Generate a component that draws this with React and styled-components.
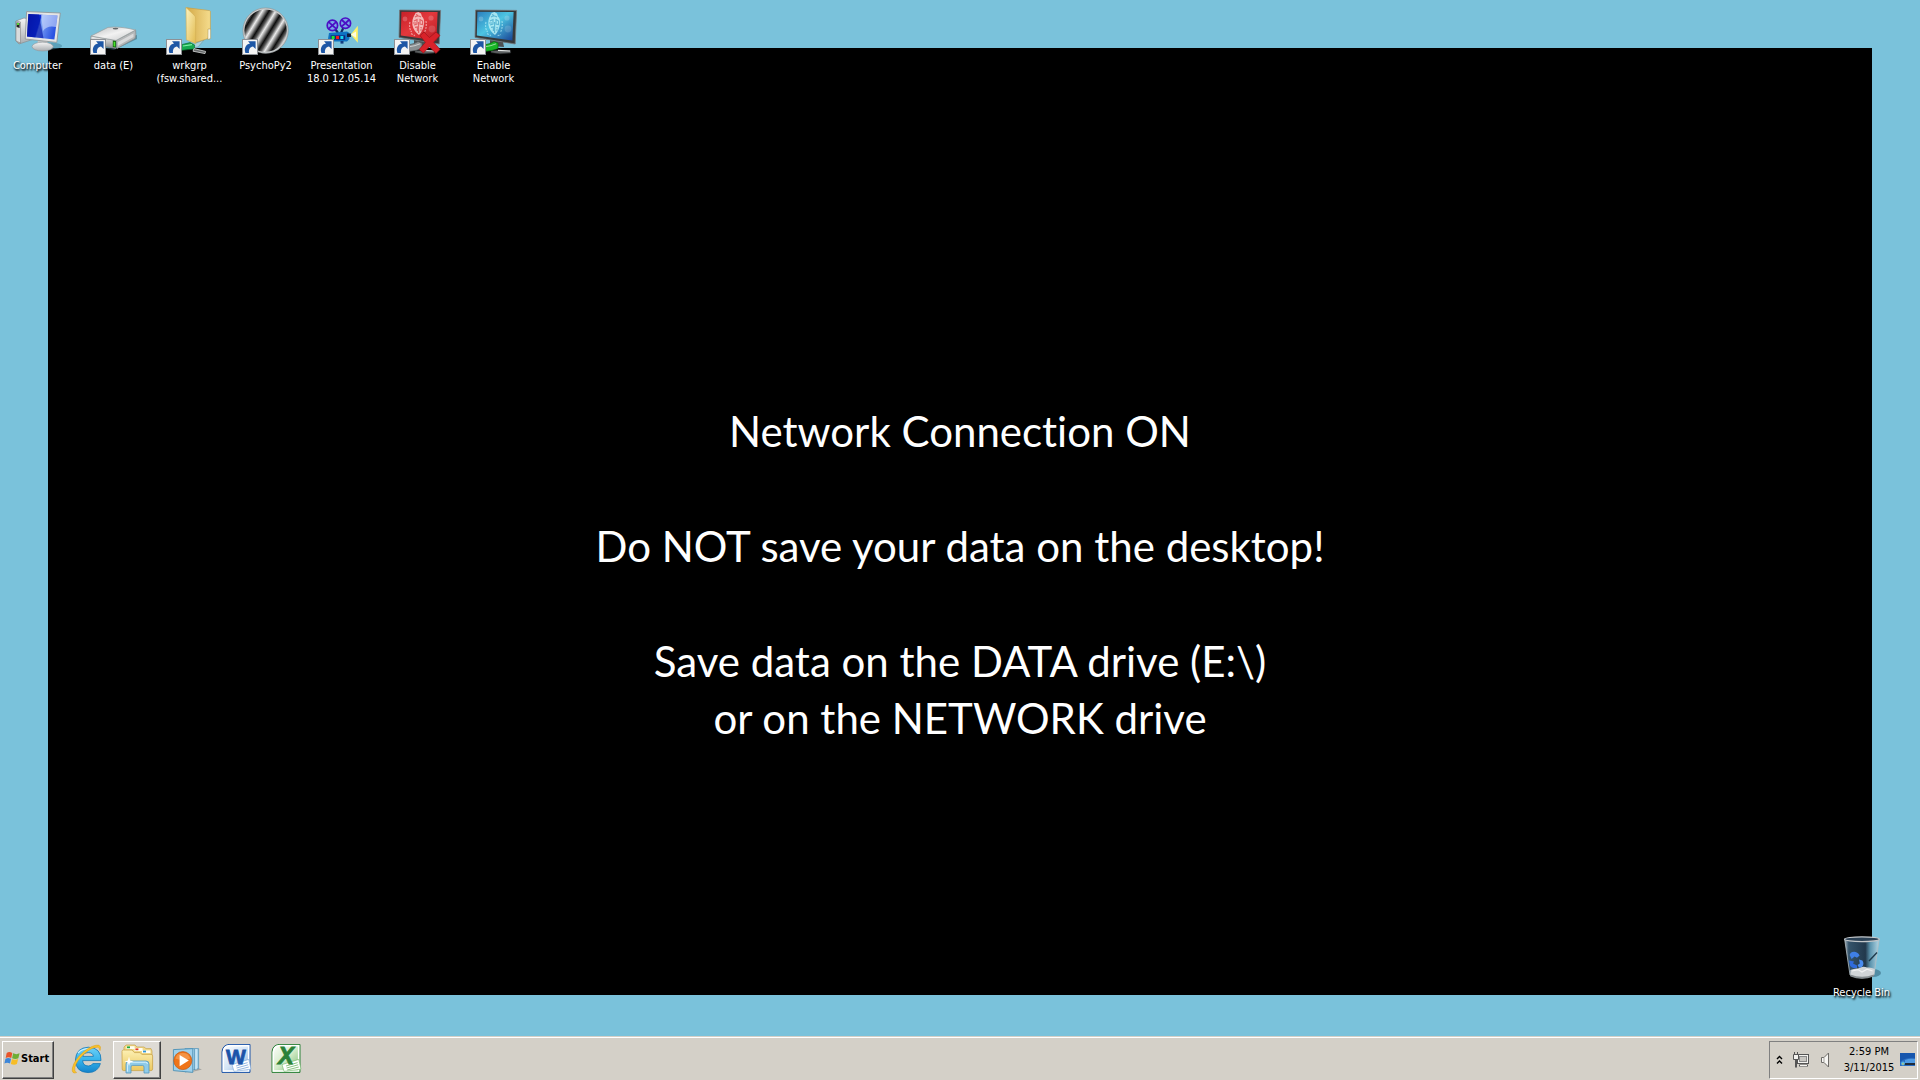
import React from "react";
import styled, { createGlobalStyle } from "styled-components";

const GlobalStyle = createGlobalStyle`
  *, *::before, *::after { box-sizing: border-box; }
  body { margin: 0; background: #7ac2db; }
  button { font: inherit; color: inherit; cursor: default; }
  p { margin: 0; }
`;

const ui = `"DejaVu Sans Condensed", "DejaVu Sans", sans-serif`;

const Screen = styled.div`
  display: flex;
  flex-direction: column;
  min-height: 100vh;
  font-family: ${ui};
  font-size: 11px;
`;

const Desktop = styled.main`
  position: relative;
  display: flex;
  flex: 1;
  padding: 48px 48px 41px;
  background: #7ac2db;
`;

const Wallpaper = styled.section`
  display: flex;
  flex: 1;
  flex-direction: column;
  align-items: center;
  justify-content: center;
  gap: 58px;
  padding-top: 106px;
  background: #000;
  color: #fff;
  font-family: Lato, sans-serif;
  font-size: 42px;
  font-variant-ligatures: none;
  line-height: 57px;
  text-align: center;
`;

const Shortcuts = styled.nav`
  position: absolute;
  top: 0;
  left: 0;
  display: flex;
  align-items: flex-start;
`;

const Bin = styled.div`
  position: absolute;
  right: 20px;
  bottom: 37px;
`;

const Shortcut = styled.button`
  display: flex;
  flex-direction: column;
  align-items: center;
  gap: 4px;
  width: 76px;
  padding: 7px 0 0;
  border: 0;
  background: none;
  color: #fff;
  line-height: 13px;
  text-align: center;
  text-shadow: 1px 1px 2px #000, 1px 2px 2px rgba(0, 0, 0, 0.7);
  svg { display: block; overflow: visible; }
`;

const Label = styled.span`
  padding-right: 1px;
  white-space: pre;
`;

const Taskbar = styled.footer`
  display: flex;
  align-items: center;
  height: 44px;
  padding: 3px 2px 1px;
  border-top: 1px solid #d4d0c8;
  background: #d4d0c8;
  box-shadow: inset 0 1px 0 #fff;
  color: #000;
`;

const raised = `
  border: 1px solid;
  border-color: #fff #404040 #404040 #fff;
  box-shadow: inset -1px -1px 0 #808080;
`;

const StartButton = styled.button`
  display: flex;
  align-items: center;
  gap: 1px;
  width: 52px;
  height: 38px;
  padding: 0 0 2px 1px;
  background: #d4d0c8;
  font-weight: 700;
  ${raised}
`;

const Apps = styled.nav`
  display: flex;
  flex: 1;
  gap: 2px;
  padding-left: 9px;
`;

const AppButton = styled.button`
  display: flex;
  align-items: center;
  justify-content: center;
  width: 48px;
  height: 38px;
  padding: 0;
  border: 1px solid transparent;
  background: ${(p) => (p.$open ? "#dedbd5" : "none")};
  ${(p) => (p.$open ? raised : "")}
`;

const Tray = styled.div`
  display: flex;
  align-items: center;
  height: 38px;
  padding: 0 0 0 5px;
  border: 1px solid;
  border-color: #808080 #fff #fff #808080;
`;

const TrayButton = styled.button`
  display: flex;
  align-items: center;
  justify-content: center;
  width: ${(p) => p.$width}px;
  height: 24px;
  padding: 0;
  border: 0;
  background: none;
`;

const Clock = styled.time`
  width: 56px;
  margin-left: 10px;
  line-height: 16px;
  text-align: center;
`;

const Big = ({ children }) => (
  <svg width="48" height="48" viewBox="0 0 48 48" aria-hidden="true">{children}</svg>
);

const Arrow = () => (
  <g>
    <rect x="0.5" y="32.5" width="15" height="15" fill="#f4f4f4" stroke="#8d9196" />
    <path d="M3.4 46C1.8 41 4 37.4 8 36.6L6 34.2H13.6V42L11 39.4C8 40 6.6 42 7 46Z" fill="#1d56a5" />
  </g>
);

const ComputerIcon = () => (
  <Big>
    <defs>
      <linearGradient id="pcScreen" x1="0" y1="0" x2="1" y2="0.25">
        <stop offset="0" stopColor="#0412a8" /><stop offset="0.45" stopColor="#0a2fd8" />
        <stop offset="0.5" stopColor="#7ea4f4" /><stop offset="1" stopColor="#2a53e2" />
      </linearGradient>
      <linearGradient id="pcMetal" x1="0" y1="0" x2="0" y2="1">
        <stop offset="0" stopColor="#f5f5f5" /><stop offset="1" stopColor="#a9adb0" />
      </linearGradient>
    </defs>
    <ellipse cx="35" cy="39" rx="13" ry="3.5" fill="#3c7f99" opacity="0.5" />
    <path d="M2 14L10 11L20 13V32L5 37L2 34Z" fill="url(#pcMetal)" stroke="#8b9093" strokeWidth="0.7" />
    <path d="M2 14L6.5 15V36L2 34Z" fill="#d9dbdc" stroke="#777" strokeWidth="0.5" />
    <path d="M2.6 15.5L5.6 16V21L2.6 20Z" fill="#222" />
    <rect x="3" y="16" width="2" height="2" fill="#55d733" />
    <path d="M24 33H33L34 39H23Z" fill="#c4c7c8" />
    <ellipse cx="28.6" cy="39.6" rx="10.6" ry="4.4" fill="url(#pcMetal)" stroke="#92979a" strokeWidth="0.6" />
    <path d="M12.6 4.6L46.3 6L42.8 35.4L11.2 32Z" fill="#e4e5e5" stroke="#8c9092" strokeWidth="0.8" />
    <path d="M14.4 7L43.5 8.6L40.4 32.4L13 29.5Z" fill="url(#pcScreen)" />
    <path d="M27 7.8L43.5 8.6L42 20Q33 18 29 24Z" fill="#dfe8ff" opacity="0.55" />
    <path d="M14.4 7L25 7.6L29.5 31.2L13 29.5Z" fill="#0515a6" opacity="0.65" />
  </Big>
);

const DriveIcon = () => (
  <Big>
    <defs>
      <linearGradient id="driveTop" x1="0" y1="0" x2="1" y2="1">
        <stop offset="0" stopColor="#bcbebf" /><stop offset="0.5" stopColor="#f2f2f2" /><stop offset="1" stopColor="#c6c8c9" />
      </linearGradient>
      <linearGradient id="driveFront" x1="0" y1="0" x2="0" y2="1">
        <stop offset="0" stopColor="#f2f2f2" /><stop offset="1" stopColor="#888b8c" />
      </linearGradient>
    </defs>
    <path d="M3 39L24 43L47 32V28Z" fill="#355c6b" opacity="0.5" />
    <path d="M1 29L26 33.5V41.5L2 37Q0 33 1 29Z" fill="url(#driveFront)" stroke="#85898b" strokeWidth="0.7" />
    <path d="M26 33.5L45.6 23Q46.5 28 45 31.5L27 41.5Z" fill="#b4b7b8" stroke="#85898b" strokeWidth="0.7" />
    <path d="M1 29L18 20.4Q30 19 45.6 23L26 33.5Z" fill="url(#driveTop)" stroke="#9a9d9e" strokeWidth="0.7" />
    <path d="M28 35L43.5 26.5V30L28 38.8Z" fill="#d9dadb" />
    <ellipse cx="25.5" cy="21.6" rx="2.8" ry="0.9" fill="#65696b" />
    <path d="M22.8 33.6L26 34V40.6L22.8 40Z" fill="#176d13" />
    <path d="M23.6 34.8L25.2 35V39.6L23.6 39.2Z" fill="#4ce02d" />
    <Arrow />
  </Big>
);

const Cable = ({ color, dark }) => (
  <g>
    <path d="M21 44L30 43L40.6 43.4V46L30 46.8L21 45.6Z" fill="#5c6061" stroke="#2d2f30" strokeWidth="0.5" />
    <path d="M28 43.4L40 44" stroke="#e3e6e6" strokeWidth="1.2" />
    <path d="M14 38L20 36.6L24 34.6L28 36V41.6L22 43.4L14 44.5Z" fill={color} stroke={dark} strokeWidth="0.7" />
    <path d="M16 39.6L21 38.6L26 36.8" stroke="#fff" strokeWidth="1" opacity="0.55" fill="none" />
  </g>
);

const FolderIcon = () => (
  <Big>
    <defs>
      <linearGradient id="folderFront" x1="0" y1="0" x2="1" y2="1">
        <stop offset="0" stopColor="#fdf3bf" /><stop offset="1" stopColor="#e2bb50" />
      </linearGradient>
      <linearGradient id="folderBack" x1="0" y1="0" x2="1" y2="0">
        <stop offset="0" stopColor="#d3a845" /><stop offset="1" stopColor="#f5dc8d" />
      </linearGradient>
    </defs>
    <path d="M30 36L38 33L32 40L26 41" fill="#a9d2dc" stroke="#7297a2" strokeWidth="0.6" />
    <path d="M20 0.6L43.6 3.6Q44.6 4 44.4 5V21L42 31.5L29.4 35.6Z" fill="url(#folderBack)" stroke="#c69b3f" strokeWidth="0.6" />
    <path d="M42 22H44.6V31.6L41.8 32.6Z" fill="#f8f6e6" stroke="#a8904b" strokeWidth="0.5" />
    <path d="M20 0.6L28 8Q29.6 9.4 29.6 11V36.6L20.4 32.8Z" fill="url(#folderFront)" stroke="#d2ae54" strokeWidth="0.6" />
    <path d="M14 38L24 35.6L28.6 38V42L22 42.6L14 43.6Z" fill="#17a84f" stroke="#06662b" strokeWidth="0.6" />
    <path d="M17 39L26 37.6" stroke="#7df0a4" strokeWidth="1.2" />
    <path d="M28 41.6L39.6 44.4L39 46.6L27 44.2Z" fill="#66696a" stroke="#d8dada" strokeWidth="0.8" />
    <Arrow />
  </Big>
);

const PsychoIcon = () => (
  <Big>
    <defs>
      <linearGradient id="grating" gradientUnits="userSpaceOnUse" x1="2.5" y1="0" x2="12.3" y2="6" spreadMethod="repeat">
        <stop offset="0" stopColor="#0c0c0c" /><stop offset="0.25" stopColor="#606060" /><stop offset="0.5" stopColor="#ececec" />
        <stop offset="0.75" stopColor="#808080" /><stop offset="1" stopColor="#0c0c0c" />
      </linearGradient>
    </defs>
    <circle cx="23.6" cy="23.6" r="22" fill="url(#grating)" stroke="#c9cccd" strokeWidth="1.6" />
    <circle cx="23.6" cy="23.6" r="22.7" fill="none" stroke="#7d8385" strokeWidth="0.5" />
    <Arrow />
  </Big>
);

const Reel = ({ cx, cy }) => (
  <g stroke="#4b0fc4" fill="none">
    <circle cx={cx} cy={cy} r="5.2" fill="#78a8e8" strokeWidth="1.7" />
    <path d={`M${cx - 3.6} ${cy - 3.2}L${cx + 3.6} ${cy + 3.2}M${cx - 3.6} ${cy + 3.2}L${cx + 3.6} ${cy - 3.2}`} strokeWidth="1.8" />
  </g>
);

const PresentationIcon = () => (
  <Big>
    <path d="M15 19L20 26M27 17L23 26" stroke="#102c63" strokeWidth="2.2" />
    <Reel cx={14.4} cy={18.4} />
    <Reel cx={27.4} cy={16.2} />
    <path d="M11 26L29 24.6L31.4 26V32L29 34.4H13L10 32Z" fill="#0e72c2" />
    <rect x="12.6" y="28.4" width="14.6" height="4.4" fill="#102077" />
    <rect x="13.6" y="29" width="3" height="3" fill="#19e634" />
    <rect x="18" y="29" width="3" height="3" fill="#f01818" />
    <rect x="22.4" y="29" width="3" height="3" fill="#16d8f0" />
    <rect x="22.5" y="34" width="3" height="2.6" fill="#113e82" />
    <path d="M29 26.5H33V30H29Z" fill="#101c3c" />
    <path d="M32.8 27.6L39.8 18.8V35.8Z" fill="#fff26a" />
    <path d="M33 27.6L38 24.4V30.8Z" fill="#fffde0" />
    <Arrow />
  </Big>
);

const Crest = ({ color, shade }) => (
  <g>
    <path d="M20 9L21.6 6L24.4 5L27 6.4L28 9.6Q30.6 12 30 17Q29 24 25 28Q19.6 24 18.4 18Q18 12 20 9Z" fill={color} opacity="0.8" />
    <path d="M21 10Q24 8 27 10M20 14L23 12.6V17L20 18M26 12.6L28.6 14V17.6L26 17ZM21 20.4L23.4 20V24M26.4 20.4L28 21M24.6 15V26M22 7.4L24 8.4M19 16H22M26 23H28" stroke={shade} strokeWidth="1.1" fill="none" opacity="0.75" />
    <path d="M16 15Q14.6 21 17.6 25M32 14Q33 20 30.6 25M17 26.6L21 28.6M27.6 28.8L31 27.6" stroke={color} strokeWidth="1.2" fill="none" strokeDasharray="2 1" opacity="0.6" />
  </g>
);

const NetworkIcon = ({ off }) => {
  const id = off ? "netOff" : "netOn";
  return (
    <Big>
      <defs>
        <linearGradient id={id} x1="0" y1="0" x2="1" y2="1">
          <stop offset="0" stopColor={off ? "#c72028" : "#2b7fbe"} />
          <stop offset="0.45" stopColor={off ? "#e2383c" : "#4dc4e2"} />
          <stop offset="1" stopColor={off ? "#b91c24" : "#163f92"} />
        </linearGradient>
      </defs>
      <path d="M20 33L33 35L34 40L20 39Z" fill="#4b5052" />
      <path d="M5.6 3L46.6 3.4L45.2 37L5 30.4Z" fill="#35383a" stroke="#73797c" strokeWidth="0.8" />
      <path d="M7.4 4.8L43.6 5L42.4 33.6L6.8 28.6Z" fill={`url(#${id})`} />
      <circle cx="37" cy="11" r="2.6" fill="#fff" opacity="0.2" />
      <circle cx="38" cy="22" r="3.4" fill="#fff" opacity="0.15" />
      <circle cx="11" cy="12" r="2.4" fill="#fff" opacity="0.2" />
      <Crest color={off ? "#fadcda" : "#c0f4f8"} shade={off ? "#d84044" : "#3fa4c8"} />
      <Cable color={off ? "#8b9092" : "#18b526"} dark={off ? "#4e5355" : "#08680f"} />
      {off && (
        <path d="M26 28.6L30 25L35.4 30.6L42 25L46 28.4L39.6 35.2L46 42.4L42 46.4L35.4 39.8L29.4 46L25.2 42.4L31.4 35.4Z" fill="#d8222a" stroke="#9c1319" strokeWidth="0.7" />
      )}
      <Arrow />
    </Big>
  );
};

const BinIcon = () => (
  <Big>
    <defs>
      <linearGradient id="binGlass" x1="0" y1="0" x2="1" y2="0">
        <stop offset="0" stopColor="#aab9c2" /><stop offset="0.12" stopColor="#35546b" />
        <stop offset="0.6" stopColor="#22384c" /><stop offset="0.74" stopColor="#5b93ad" /><stop offset="1" stopColor="#b4d8e6" />
      </linearGradient>
    </defs>
    <ellipse cx="35" cy="39" rx="8" ry="4" fill="#2f6076" opacity="0.55" />
    <path d="M6.6 5L12 41Q24 47 36 41L41.2 5Z" fill="url(#binGlass)" stroke="#b3bcc1" strokeWidth="0.8" />
    <path d="M12.4 36Q17 34 20 34.6Q25 31.6 29 33.6Q33 33 36.8 35L36 41Q24 46.6 12.2 41Z" fill="#d0d4d7" />
    <path d="M14 37L20 35.6L24 38L29 35.2L34.6 37" stroke="#f0f1f2" strokeWidth="1.2" fill="none" />
    <path d="M12.2 40.4Q24 45 36 40.4L35.6 42.6Q24 47 12.4 42.6Z" fill="#858c90" />
    <path d="M11.6 21Q12.6 17.8 16 17.8Q19.6 18 21.6 21.4L19 23.8L16.6 22.4L13.6 25Z" fill="#3f7fe6" />
    <path d="M11 26.6L16 27.6L15 29.4L19 31.4V34Q13 34.6 11.8 31Z" fill="#2f6bdc" />
    <path d="M21 25.6L24.4 26.6Q26.6 30 24 33L21 33.8L19.6 31L21.8 29.4Z" fill="#4a8cf0" />
    <path d="M31 27L39 18.4" stroke="#1f3a4b" strokeWidth="1.4" />
    <ellipse cx="23.9" cy="5.2" rx="17.3" ry="2.4" fill="#2b4155" stroke="#c3c7ca" strokeWidth="1.2" />
  </Big>
);

const Flag = () => (
  <svg width="16" height="15" viewBox="0 1 15.4 14" aria-hidden="true">
    <path d="M2.6 2.6Q5 1 8 2.6L7 7.4Q4.4 6 1.6 7.4Z" fill="#e8542a" />
    <path d="M8.8 3Q11.8 4.6 15 3L13.8 7.8Q11 9 7.8 7.8Z" fill="#6fae34" />
    <path d="M1.4 8.2Q4 6.8 6.8 8.2L5.8 12.8Q3 11.4 0.4 12.8Z" fill="#3d86d8" />
    <path d="M7.6 8.6Q10.6 10 13.6 8.6L12.4 13.4Q9.6 14.6 6.6 13.2Z" fill="#f7bd26" />
  </svg>
);

const IeIcon = () => (
  <svg width="32" height="32" viewBox="0 1 32 32" aria-hidden="true">
    <defs>
      <linearGradient id="ieBlue" x1="0" y1="0" x2="0" y2="1">
        <stop offset="0" stopColor="#6fd0f6" /><stop offset="0.5" stopColor="#36b4ec" /><stop offset="1" stopColor="#1583cb" />
      </linearGradient>
    </defs>
    <path d="M30 17.6H11.6Q12 23 17.4 23Q20.6 23 21.8 20.6H29.4Q27 29.6 17 29.6Q4.6 29.2 4.4 17Q5 4.6 17.4 4.2Q30.4 4.6 30 17.6ZM11.8 13.4H22.4Q22 9.6 17.2 9.6Q12.4 9.8 11.8 13.4Z" fill="url(#ieBlue)" stroke="#1276b8" strokeWidth="0.8" />
    <path d="M7 10Q11 5.6 18 5.6" stroke="#c8effd" strokeWidth="1.2" fill="none" />
    <path d="M5.6 29.6Q0.4 31.4 1.4 25Q3.4 16.4 13 8.4Q22.6 1.2 28 2.2Q30.4 3 29 7.6Q29 4.6 26.4 4.2Q21.4 4 13.6 10.4Q5.6 17.6 3.8 24.4Q3.2 28.4 5.6 29.6Z" fill="#f9c22a" stroke="#dc9a10" strokeWidth="0.5" />
  </svg>
);

const ExplorerIcon = () => (
  <svg width="34" height="32" viewBox="0 1 34 32" aria-hidden="true">
    <defs>
      <linearGradient id="libFolder" x1="0" y1="0" x2="0" y2="1">
        <stop offset="0" stopColor="#fcf0b4" /><stop offset="1" stopColor="#ecc85f" />
      </linearGradient>
    </defs>
    <path d="M4 4L6 2H15L17 4H24L26 5.6H31L32 8V24H4Z" fill="#f1d989" stroke="#c7a34a" strokeWidth="0.7" />
    <path d="M6.6 3.2H14.6V6H6.6Z" fill="#fffef2" /><rect x="7" y="3.4" width="3" height="1.8" fill="#20a73a" />
    <path d="M14.6 5H22.6V8H14.6Z" fill="#fffef2" /><rect x="15.4" y="5.4" width="3" height="1.8" fill="#e13a26" />
    <path d="M22 7.4H30.4V10H22Z" fill="#fffef2" /><rect x="23" y="7.6" width="3" height="1.8" fill="#2f97e0" />
    <path d="M2 8.4Q2 7 3.4 7H12L14.4 9.6H20L22 11.4H31Q32.6 11.4 32.6 13V26Q32.6 27.6 31 27.6H3.6Q2.2 27.6 2.2 26Z" fill="url(#libFolder)" stroke="#cba64c" strokeWidth="0.8" />
    <path d="M6 30V21Q6 18 9 18H26Q29 18 29 21V30H24V24Q24 22.4 22.4 22.4H12.6Q11 22.4 11 24V30Z" fill="#8fcbe9" stroke="#5798bd" strokeWidth="0.8" />
    <path d="M7.4 28.6V21.4Q7.4 19.2 9.6 19.2H25.4Q27.4 19.2 27.4 21" stroke="#d8f3ff" strokeWidth="1" fill="none" />
    <path d="M9 13.6L10 17.4L13.6 18.4L10 19.4L9 23L8 19.4L4.4 18.4L8 17.4Z" fill="#fff" />
  </svg>
);

const MediaIcon = () => (
  <svg width="32" height="32" viewBox="0 0 32 32" aria-hidden="true">
    <path d="M21 28L31 25.4L27 24Z" fill="#777" opacity="0.5" />
    <path d="M14 4.6H27.6V24.6L14 28Z" fill="#a5d3ea" stroke="#4b8eb3" strokeWidth="0.7" />
    <path d="M25 5V25.4" stroke="#e7f6fd" strokeWidth="1" /><path d="M23.6 5V26" stroke="#4b8eb3" strokeWidth="0.7" />
    <path d="M2.4 5.6L21.8 4.6V28.4L2.4 26.6Z" fill="#9fd1ec" stroke="#4b8eb3" strokeWidth="0.9" />
    <circle cx="11.8" cy="16.6" r="9" fill="#ef7419" stroke="#c9560b" strokeWidth="0.7" />
    <path d="M4.4 14.4A7.8 7.8 0 0 1 19.2 14.4Q12 17.6 4.4 14.4Z" fill="#f7a863" opacity="0.6" />
    <path d="M8.6 11L17.8 16.6L8.6 22.2Z" fill="#fff" />
  </svg>
);

const OfficeIcon = ({ letter, color, edge, tint }) => (
  <svg width="32" height="32" viewBox="1 2 32 32" aria-hidden="true">
    <defs>
      <linearGradient id={`office${letter}`} x1="0" y1="0" x2="1" y2="1">
        <stop offset="0" stopColor="#fff" /><stop offset="0.5" stopColor={tint} /><stop offset="1" stopColor={edge} />
      </linearGradient>
    </defs>
    <path d="M9 2.4H30V30.4H2V10Q2.4 3.2 9 2.4Z" fill={`url(#office${letter})`} stroke={color} strokeWidth="1" />
    <path d="M9 3.8H28.6V29H3.4V10Q4 4.6 9 3.8Z" fill="none" stroke="#fff" strokeWidth="1.4" />
    <path d="M12 22.6L28.8 17.4L31 27.2L14 29.4Z" fill="#fff" stroke={edge} strokeWidth="0.6" />
    <path d="M16 24L27.6 20.6M16.6 26L28.2 22.8M17.2 28L28.8 25" stroke={edge} strokeWidth="0.8" />
    <text x="16" y="22" textAnchor="middle" fontFamily="Liberation Sans, sans-serif" fontSize={letter === "W" ? 21 : 24} fontWeight="700" fontStyle={letter === "W" ? "normal" : "italic"} fill={color} stroke={color} strokeWidth="0.8">{letter}</text>
  </svg>
);

const Chevrons = () => (
  <svg width="7" height="10" viewBox="0 0 7 10" fill="none" stroke="#000" strokeWidth="1.4" aria-hidden="true">
    <path d="M1 4L3.5 1.5L6 4M1 8.6L3.5 6.1L6 8.6" />
  </svg>
);

const LanIcon = () => (
  <svg width="16" height="16" viewBox="0 0 16 16" fill="none" aria-hidden="true">
    <rect x="4.5" y="2.5" width="11" height="9" fill="#f4f3f0" stroke="#555" />
    <rect x="6.5" y="4.5" width="7" height="5" fill="#c8c6c1" stroke="#888" />
    <path d="M6 13.5H15" stroke="#555" strokeWidth="2" />
    <path d="M7 13.5H14" stroke="#f4f3f0" />
    <path d="M0.5 2.5H5.5V7.5H0.5Z" fill="#f4f3f0" stroke="#555" />
    <path d="M1.5 0V2M4.5 0V2M2.5 8V15.5M3.5 8V15.5" stroke="#555" />
  </svg>
);

const SpeakerIcon = () => (
  <svg width="10" height="16" viewBox="0 0 10 16" aria-hidden="true">
    <path d="M1.5 5.5H4L8.5 1V15L4 10.5H1.5Z" fill="#f7f6f3" stroke="#6d6b67" />
    <path d="M4 5.5V10.5" stroke="#a5a39e" />
  </svg>
);

const DisplayIcon = () => (
  <svg width="15" height="14" viewBox="0 0 15 14" aria-hidden="true">
    <rect x="0" y="0" width="15" height="13" fill="#2a6cc0" />
    <path d="M0 0H15V5Q6 4 0 9Z" fill="#1756ad" />
    <path d="M5 7Q10 5 15 6V10H5Z" fill="#4f9be4" />
    <rect x="3" y="10" width="12" height="2" fill="#1d2b3c" />
    <circle cx="3" cy="10.6" r="2" fill="#4fb3ea" />
    <path d="M2 11L3.4 9.6V12Z" fill="#f5d33c" />
  </svg>
);

const shortcuts = [
  { label: "Computer", icon: <ComputerIcon /> },
  { label: "data (E)", icon: <DriveIcon /> },
  { label: "wrkgrp\n(fsw.shared...", icon: <FolderIcon /> },
  { label: "PsychoPy2", icon: <PsychoIcon /> },
  { label: "Presentation\n18.0 12.05.14", icon: <PresentationIcon /> },
  { label: "Disable\nNetwork", icon: <NetworkIcon off /> },
  { label: "Enable\nNetwork", icon: <NetworkIcon /> },
];

const apps = [
  { name: "Internet Explorer", icon: <IeIcon /> },
  { name: "Windows Explorer", icon: <ExplorerIcon />, open: true },
  { name: "Windows Media Player", icon: <MediaIcon /> },
  { name: "Word", icon: <OfficeIcon letter="W" color="#1b53a8" edge="#7ba6d8" tint="#d5e5f6" /> },
  { name: "Excel", icon: <OfficeIcon letter="X" color="#2b8138" edge="#6fb565" tint="#d4ecca" /> },
];

export default function App() {
  return (
    <Screen>
      <GlobalStyle />
      <Desktop>
        <Wallpaper>
          <p>Network Connection ON</p>
          <p>Do NOT save your data on the desktop!</p>
          <p>
            Save data on the DATA drive (E:\)
            <br />
            or on the NETWORK drive
          </p>
        </Wallpaper>
        <Shortcuts aria-label="Desktop shortcuts">
          {shortcuts.map((s) => (
            <Shortcut key={s.label} type="button">
              {s.icon}
              <Label>{s.label}</Label>
            </Shortcut>
          ))}
        </Shortcuts>
        <Bin>
          <Shortcut type="button">
            <BinIcon />
            <Label>Recycle Bin</Label>
          </Shortcut>
        </Bin>
      </Desktop>
      <Taskbar>
        <StartButton type="button">
          <Flag />
          Start
        </StartButton>
        <Apps aria-label="Taskbar">
          {apps.map((a) => (
            <AppButton key={a.name} type="button" aria-label={a.name} $open={a.open}>
              {a.icon}
            </AppButton>
          ))}
        </Apps>
        <Tray>
          <TrayButton type="button" $width={8} aria-label="Show hidden icons"><Chevrons /></TrayButton>
          <TrayButton type="button" $width={36} aria-label="Network"><LanIcon /></TrayButton>
          <TrayButton type="button" $width={12} aria-label="Volume"><SpeakerIcon /></TrayButton>
          <Clock dateTime="2015-03-11T14:59">
            2:59 PM
            <br />
            3/11/2015
          </Clock>
          <TrayButton type="button" $width={20} aria-label="Show desktop"><DisplayIcon /></TrayButton>
        </Tray>
      </Taskbar>
    </Screen>
  );
}
